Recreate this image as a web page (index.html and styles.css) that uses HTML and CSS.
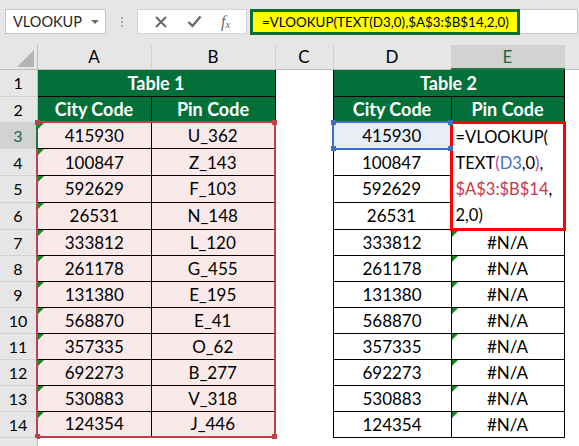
FILE: index.html
```html
<!DOCTYPE html>
<html lang="en">
<head>
    <meta charset="UTF-8">
    <title>VLOOKUP TEXT</title>
    <link rel="stylesheet" href="styles.css">
</head>
<body>
    <div class="topbar">
        <div class="namebox"><span>VLOOKUP</span><span class="caret"></span></div>
        <div class="grip"><i></i><i></i><i></i></div>
        <div class="fx-buttons">
            <svg width="14" height="14" viewBox="0 0 14 14"><path d="M2 2 L12 12 M12 2 L2 12" stroke="#6a6a6a" stroke-width="2" fill="none"/></svg>
            <svg width="15" height="13" viewBox="0 0 15 13"><path d="M1.5 7 L5.5 11 L13.5 1.5" stroke="#6a6a6a" stroke-width="2.4" fill="none"/></svg>
            <span class="fx">f<sub>x</sub></span>
        </div>
        <div class="formula-input">
            <div class="formula">=VLOOKUP(TEXT(D3,0),$A$3:$B$14,2,0)</div>
        </div>
    </div>

    <table class="sheet">
        <colgroup>
            <col class="w-rh"><col class="w-a"><col class="w-b"><col class="w-c"><col class="w-d"><col class="w-e"><col class="w-f">
        </colgroup>
        <tr class="r-head">
            <td class="ch corner"><span class="all"></span></td>
            <td class="ch">A</td>
            <td class="ch">B</td>
            <td class="ch">C</td>
            <td class="ch">D</td>
            <td class="ch on">E</td>
            <td class="ch last"></td>
        </tr>
        <tr class="r1">
            <td class="rh">1</td>
            <td class="hd" colspan="2">Table 1</td>
            <td></td>
            <td class="hd" colspan="2">Table 2</td>
            <td></td>
        </tr>
        <tr>
            <td class="rh">2</td>
            <td class="hd">City Code</td>
            <td class="hd">Pin Code</td>
            <td></td>
            <td class="hd">City Code</td>
            <td class="hd">Pin Code</td>
            <td></td>
        </tr>
        <tr>
            <td class="rh on">3</td>
            <td class="pk tri rl rt">415930<i class="hdl tl"></i></td>
            <td class="pk rr rt">U_362<i class="hdl tr"></i></td>
            <td></td>
            <td class="bx sel">415930<i class="hdl tl blue"></i><i class="hdl tr blue"></i><i class="hdl bl blue"></i><i class="hdl br blue"></i></td>
            <td class="edit" rowspan="4">=VLOOKUP(<br>TEXT<span class="pa">(</span><span class="ref">D3</span>,0<span class="pa">)</span>,<br><span class="rng">$A$3:$B$14</span>,<br>2,0)</td>
            <td></td>
        </tr>
        <tr>
            <td class="rh">4</td>
            <td class="pk tri rl">100847</td>
            <td class="pk rr">Z_143</td>
            <td></td>
            <td class="bx">100847</td>
            <td></td>
        </tr>
        <tr>
            <td class="rh">5</td>
            <td class="pk tri rl">592629</td>
            <td class="pk rr">F_103</td>
            <td></td>
            <td class="bx">592629</td>
            <td></td>
        </tr>
        <tr>
            <td class="rh">6</td>
            <td class="pk tri rl">26531</td>
            <td class="pk rr">N_148</td>
            <td></td>
            <td class="bx">26531</td>
            <td></td>
        </tr>
        <tr>
            <td class="rh">7</td>
            <td class="pk tri rl">333812</td>
            <td class="pk rr">L_120</td>
            <td></td>
            <td class="bx">333812</td>
            <td class="bx tri">#N/A</td>
            <td></td>
        </tr>
        <tr>
            <td class="rh">8</td>
            <td class="pk tri rl">261178</td>
            <td class="pk rr">G_455</td>
            <td></td>
            <td class="bx">261178</td>
            <td class="bx tri">#N/A</td>
            <td></td>
        </tr>
        <tr>
            <td class="rh">9</td>
            <td class="pk tri rl">131380</td>
            <td class="pk rr">E_195</td>
            <td></td>
            <td class="bx">131380</td>
            <td class="bx tri">#N/A</td>
            <td></td>
        </tr>
        <tr>
            <td class="rh">10</td>
            <td class="pk tri rl">568870</td>
            <td class="pk rr">E_41</td>
            <td></td>
            <td class="bx">568870</td>
            <td class="bx tri">#N/A</td>
            <td></td>
        </tr>
        <tr>
            <td class="rh">11</td>
            <td class="pk tri rl">357335</td>
            <td class="pk rr">O_62</td>
            <td></td>
            <td class="bx">357335</td>
            <td class="bx tri">#N/A</td>
            <td></td>
        </tr>
        <tr>
            <td class="rh">12</td>
            <td class="pk tri rl">692273</td>
            <td class="pk rr">B_277</td>
            <td></td>
            <td class="bx">692273</td>
            <td class="bx tri">#N/A</td>
            <td></td>
        </tr>
        <tr>
            <td class="rh">13</td>
            <td class="pk tri rl">530883</td>
            <td class="pk rr">V_318</td>
            <td></td>
            <td class="bx">530883</td>
            <td class="bx tri">#N/A</td>
            <td></td>
        </tr>
        <tr>
            <td class="rh">14</td>
            <td class="pk tri rl rb">124354<i class="hdl bl"></i></td>
            <td class="pk rr rb">J_446<i class="hdl br"></i></td>
            <td></td>
            <td class="bx">124354</td>
            <td class="bx tri">#N/A</td>
            <td></td>
        </tr>
        <tr class="r15">
            <td class="rh">15</td>
            <td></td><td></td><td></td><td></td><td></td><td></td>
        </tr>
    </table>
</body>
</html>
```

FILE: styles.css
```css
* {
    box-sizing: border-box;
}

body {
    margin: 0;
    background: #fff;
    font-family: Lato, 'Liberation Sans', sans-serif;
    width: 579px;
    height: 446px;
    overflow: hidden;
}

/* formula bar */
.topbar {
    height: 45px;
    background: #e6e6e6;
    display: flex;
    align-items: flex-start;
    padding-top: 9px;
}

.namebox {
    margin-left: 5px;
    width: 101px;
    height: 25px;
    background: #fff;
    border: 1px solid #c6c6c6;
    display: flex;
    align-items: center;
    justify-content: space-between;
    padding: 0 6px 0 7px;
    font-size: 14.5px;
    color: #262626;
}

.caret {
    border-left: 4px solid transparent;
    border-right: 4px solid transparent;
    border-top: 4px solid #6b6b6b;
}

.grip {
    width: 31px;
    height: 25px;
    display: flex;
    flex-direction: column;
    align-items: center;
    justify-content: center;
    gap: 2px;
}

.grip i {
    width: 2px;
    height: 2px;
    background: #a6a6a6;
}

.fx-buttons {
    width: 110px;
    height: 25px;
    background: #fff;
    border: 1px solid #d4d4d4;
    display: flex;
    align-items: center;
    justify-content: space-around;
    padding: 0 6px;
}

.fx {
    font-family: 'Liberation Serif', serif;
    font-style: italic;
    font-size: 16px;
    color: #6a6a6a;
    line-height: 1;
}

.fx sub {
    font-size: 11px;
    vertical-align: -1px;
}

.formula-input {
    flex: 1;
    margin-left: 3px;
    margin-right: 1px;
    height: 25px;
    background: #fff;
    border: 1px solid #c6c6c6;
    border-left: none;
}

.formula {
    display: inline-block;
    height: 26px;
    margin-top: -1px;
    background: #ffff00;
    border: 3px solid #0d6b35;
    padding: 0 8px 0 9px;
    font-size: 13.4px;
    line-height: 20px;
    color: #000;
}

/* grid */
.sheet {
    border-collapse: collapse;
    table-layout: fixed;
    width: 579px;
}

.w-rh { width: 37px; }
.w-a { width: 114px; }
.w-b { width: 124px; }
.w-c { width: 58px; }
.w-d { width: 118px; }
.w-e { width: 113px; }
.w-f { width: 15px; }

.sheet tr {
    height: 26px;
}

.sheet .r-head {
    height: 24px;
}

.sheet .r1 {
    height: 27px;
}

.sheet td {
    padding: 0;
    text-align: center;
    font-size: 17px;
    color: #000;
    position: relative;
    white-space: nowrap;
}

.r15 .rh {
    vertical-align: top;
    padding-top: 4px;
}

.ch {
    background: #e6e6e6;
    color: #262626;
    font-size: 16px;
    border-right: 1px solid #d0d0d0;
    border-bottom: 1px solid #bcbcbc;
}

.ch.last {
    border-right: none;
}

.ch.on {
    background: #d2d2d2;
    color: #1e6b41;
    border-bottom: 2px solid #217346;
}

.corner {
    border-right: 1px solid #bcbcbc;
}

.all {
    position: absolute;
    right: 3px;
    bottom: 2px;
    border-left: 17px solid transparent;
    border-bottom: 17px solid #b4b4b4;
}

.rh {
    background: #e6e6e6;
    color: #262626;
    font-size: 16px !important;
    border-right: 1px solid #bcbcbc;
    border-bottom: 1px solid #d2d2d2;
}

.rh.on {
    background: #d2d2d2;
    color: #1e6b41 !important;
    border-right: 2px solid #217346;
}

.hd {
    background: #03703a;
    color: #fff !important;
    font-weight: bold;
    font-size: 18px !important;
    border: 1px solid #000;
}

.pk {
    background: #f9e9e9;
    border: 1px solid #000;
}

.bx {
    border: 1px solid #000;
}

/* red range border A3:B14 */
.rl { border-left: 2px solid #c0404c; }
.rr { border-right: 2px solid #c0404c; }
.rt { border-top: 2px solid #c0404c; }
.rb { border-bottom: 2px solid #c0404c; }

.sel {
    background: #e8edf7;
    border: 2px solid #3f6fc4;
}

.edit {
    border: 3px solid #ff0000;
    text-align: left !important;
    vertical-align: top;
    padding: 0 0 0 3px !important;
    line-height: 26px;
    font-size: 16.5px !important;
}

.pa { color: #a94c9c; }
.ref { color: #4472c4; }
.rng { color: #c8364a; }

.tri::before {
    content: "";
    position: absolute;
    left: 0;
    top: 0;
    border-top: 6px solid #16871f;
    border-right: 6px solid transparent;
}

.hdl {
    position: absolute;
    width: 5px;
    height: 5px;
    background: #c0404c;
}

.hdl.blue {
    background: #3f6fc4;
}

.tl { left: -3px; top: -3px; }
.tr { right: -3px; top: -3px; }
.bl { left: -3px; bottom: -3px; }
.br { right: -3px; bottom: -3px; }
```
